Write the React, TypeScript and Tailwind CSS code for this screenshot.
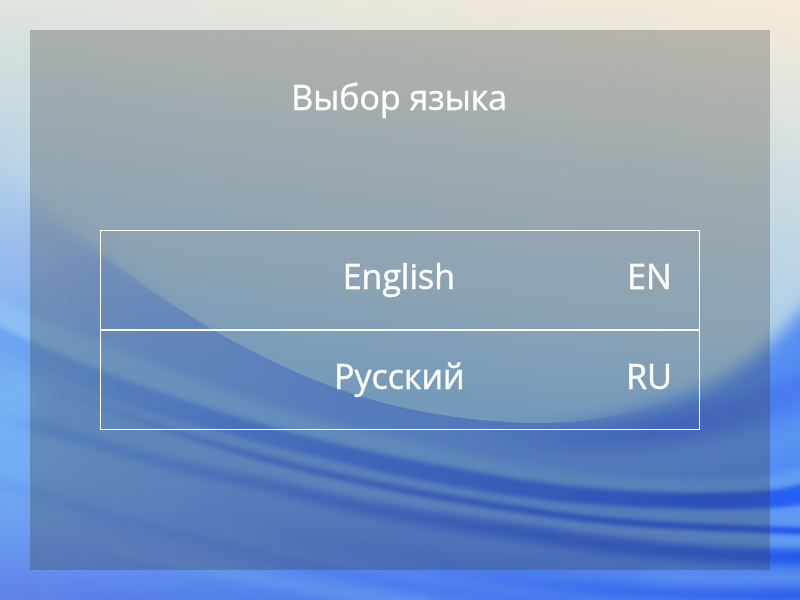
type Point = [number, number];

// Smooth Catmull-Rom curve through the points, starting with a move or a line.
function curve(points: Point[], start: 'M' | 'L' = 'M'): string {
  let d = `${start}${points[0][0]} ${points[0][1]}`;
  for (let i = 0; i < points.length - 1; i++) {
    const p0 = points[Math.max(0, i - 1)];
    const p1 = points[i];
    const p2 = points[i + 1];
    const p3 = points[Math.min(points.length - 1, i + 2)];
    d += `C${p1[0] + (p2[0] - p0[0]) / 6} ${p1[1] + (p2[1] - p0[1]) / 6} ${p2[0] - (p3[0] - p1[0]) / 6} ${p2[1] - (p3[1] - p1[1]) / 6} ${p2[0]} ${p2[1]}`;
  }
  return d;
}

function band(top: Point[], bottom: Point[]): string {
  return curve(top) + curve([...bottom].reverse(), 'L') + 'Z';
}

const bowl: Point[] = [[-40, 110], [0, 162], [30, 194], [60, 221], [100, 253], [155, 293], [215, 331], [270, 360], [325, 384], [380, 402], [430, 413], [480, 420], [530, 423], [580, 421], [630, 413], [680, 399], [720, 382], [755, 359], [780, 337], [840, 272]];
const ridge: Point[] = [[-40, 306], [0, 328], [30, 342], [90, 367], [135, 384], [200, 406], [270, 427], [340, 445], [400, 458], [470, 471], [530, 481], [600, 489], [680, 493], [760, 491], [800, 485], [840, 476]];
const ridgeTop: Point[] = [[-40, 275], [0, 298], [30, 314], [90, 338], [135, 356], [200, 381], [270, 405], [340, 425], [400, 439], [470, 455], [530, 466], [600, 475], [680, 479], [760, 477], [800, 468], [840, 459]];
const trough: Point[] = [[-40, 331], [0, 351], [30, 364], [100, 394], [150, 412], [200, 426], [270, 445], [340, 462], [400, 476], [470, 489], [530, 498], [600, 505], [700, 509], [770, 508], [800, 505], [840, 500]];
const line: Point[] = [[0, 368], [40, 383], [100, 407], [200, 440], [270, 460], [345, 478], [430, 495], [530, 511], [600, 520], [680, 526], [800, 531], [840, 532]];
const lowTop: Point[] = [[-40, 402], [0, 411], [30, 419], [100, 439], [180, 461], [270, 480], [360, 500], [450, 515], [530, 526], [600, 536], [700, 546], [800, 550], [840, 550]];
const lowBottom: Point[] = [[-40, 412], [0, 421], [30, 429], [100, 450], [180, 472], [270, 492], [360, 514], [450, 530], [530, 542], [600, 552], [700, 561], [800, 565], [840, 565]];
const fold: Point[] = [[-40, 473], [0, 484], [60, 501], [120, 520], [200, 541], [270, 558], [330, 571], [400, 584], [460, 593], [540, 602], [600, 608]];

function Wallpaper() {
  return (
    <svg className="absolute inset-0 h-full w-full" viewBox="0 0 800 600" aria-hidden="true">
      <defs>
        <linearGradient id="sky" gradientUnits="userSpaceOnUse" x1="0" y1="-104" x2="-58" y2="342">
          <stop offset="0" stopColor="#f5ebd7" />
          <stop offset=".1" stopColor="#ede8da" />
          <stop offset=".23" stopColor="#dfe4de" />
          <stop offset=".4" stopColor="#cddce0" />
          <stop offset=".55" stopColor="#bfd5e4" />
          <stop offset=".77" stopColor="#abcfe9" />
          <stop offset="1" stopColor="#8cc3f3" />
        </linearGradient>
        <linearGradient id="sea" gradientUnits="userSpaceOnUse" x1="0" y1="170" x2="0" y2="600">
          <stop offset="0" stopColor="#b2cfe9" />
          <stop offset=".15" stopColor="#9fc0ec" />
          <stop offset=".32" stopColor="#85b2ef" />
          <stop offset=".5" stopColor="#77aff3" />
          <stop offset=".68" stopColor="#73aff3" />
          <stop offset=".85" stopColor="#6b9cee" />
          <stop offset="1" stopColor="#5c80e8" />
        </linearGradient>
        <linearGradient id="deep" gradientUnits="userSpaceOnUse" x1="0" y1="0" x2="800" y2="0">
          <stop offset=".04" stopColor="#578cf0" stopOpacity="0" />
          <stop offset=".14" stopColor="#578cf0" stopOpacity=".2" />
          <stop offset=".5" stopColor="#4f86f4" stopOpacity=".62" />
          <stop offset="1" stopColor="#437ef2" stopOpacity=".7" />
        </linearGradient>
        <linearGradient id="dark" gradientUnits="userSpaceOnUse" x1="0" y1="0" x2="800" y2="0">
          <stop offset="0" stopColor="#6ca5f3" stopOpacity=".65" />
          <stop offset=".12" stopColor="#5c98f2" stopOpacity=".6" />
          <stop offset=".32" stopColor="#4683f2" stopOpacity=".9" />
          <stop offset=".5" stopColor="#3e74f0" />
          <stop offset=".7" stopColor="#2f68ee" />
          <stop offset=".9" stopColor="#2058ee" />
          <stop offset="1" stopColor="#285ff5" />
        </linearGradient>
        <linearGradient id="thin" gradientUnits="userSpaceOnUse" x1="0" y1="0" x2="800" y2="0">
          <stop offset=".06" stopColor="#5384ec" stopOpacity="0" />
          <stop offset=".33" stopColor="#4378ea" stopOpacity=".9" />
          <stop offset=".65" stopColor="#2d60e7" />
          <stop offset="1" stopColor="#1f53ed" />
        </linearGradient>
        <linearGradient id="low" gradientUnits="userSpaceOnUse" x1="0" y1="0" x2="800" y2="0">
          <stop offset="0" stopColor="#5d9cf0" stopOpacity=".75" />
          <stop offset=".4" stopColor="#4475ea" />
          <stop offset=".75" stopColor="#2f62e6" />
          <stop offset="1" stopColor="#2057ec" />
        </linearGradient>
        <linearGradient id="shine" gradientUnits="userSpaceOnUse" x1="0" y1="0" x2="800" y2="0">
          <stop offset="0" stopColor="#8fc3f3" />
          <stop offset=".35" stopColor="#7bb8f3" />
          <stop offset="1" stopColor="#69a5f1" />
        </linearGradient>
        <linearGradient id="rise" gradientUnits="userSpaceOnUse" x1="450" y1="0" x2="800" y2="0">
          <stop offset="0" stopColor="#3f70ec" stopOpacity="0" />
          <stop offset=".6" stopColor="#3d6cec" stopOpacity=".75" />
          <stop offset="1" stopColor="#4874ee" stopOpacity=".8" />
        </linearGradient>
        <linearGradient id="haze" gradientUnits="userSpaceOnUse" x1="180" y1="0" x2="640" y2="0">
          <stop offset="0" stopColor="#4777e8" stopOpacity="0" />
          <stop offset=".4" stopColor="#4777e8" stopOpacity=".55" />
          <stop offset="1" stopColor="#3f70ea" stopOpacity=".55" />
        </linearGradient>
        <linearGradient id="crease" gradientUnits="userSpaceOnUse" x1="0" y1="0" x2="600" y2="0">
          <stop offset="0" stopColor="#5d92ee" stopOpacity=".45" />
          <stop offset=".5" stopColor="#4b78ec" stopOpacity=".65" />
          <stop offset="1" stopColor="#3f70ec" stopOpacity=".75" />
        </linearGradient>
        <linearGradient id="floor" gradientUnits="userSpaceOnUse" x1="420" y1="0" x2="800" y2="0">
          <stop offset="0" stopColor="#2c5deb" stopOpacity="0" />
          <stop offset=".4" stopColor="#2c5deb" stopOpacity=".45" />
          <stop offset="1" stopColor="#2556ea" stopOpacity=".85" />
        </linearGradient>
        <linearGradient id="gleam" gradientUnits="userSpaceOnUse" x1="520" y1="0" x2="800" y2="0">
          <stop offset="0" stopColor="#5e8eee" stopOpacity="0" />
          <stop offset=".6" stopColor="#5e8eee" stopOpacity=".7" />
        </linearGradient>
        <linearGradient id="sharpness" gradientUnits="userSpaceOnUse" x1="0" y1="0" x2="800" y2="0">
          <stop offset=".08" stopColor="#000" />
          <stop offset=".28" stopColor="#fff" />
          <stop offset=".66" stopColor="#fff" />
          <stop offset=".82" stopColor="#000" />
        </linearGradient>
        <mask id="crisp" maskUnits="userSpaceOnUse" x="-50" y="0" width="900" height="700">
          <rect x="-50" width="900" height="700" fill="url(#sharpness)" />
        </mask>
        <filter id="b1" filterUnits="userSpaceOnUse" x="-60" y="-60" width="920" height="760"><feGaussianBlur stdDeviation="2.2" /></filter>
        <filter id="b3" filterUnits="userSpaceOnUse" x="-60" y="-60" width="920" height="760"><feGaussianBlur stdDeviation="4" /></filter>
        <filter id="b8" filterUnits="userSpaceOnUse" x="-60" y="-60" width="920" height="760"><feGaussianBlur stdDeviation="9" /></filter>
        <clipPath id="below"><path d={curve(bowl) + 'L840 640L-40 640Z'} /></clipPath>
      </defs>
      <rect width="800" height="600" fill="url(#sky)" />
      <path d={curve(bowl) + 'L840 660L-40 660Z'} fill="url(#sea)" filter="url(#b8)" />
      <path d={curve(bowl) + 'L840 660L-40 660Z'} fill="url(#deep)" filter="url(#b8)" />
      <g mask="url(#crisp)">
        <rect width="800" height="600" fill="url(#sky)" />
        <g clipPath="url(#below)">
          <rect y="150" width="800" height="450" fill="url(#sea)" />
          <rect x="-40" y="150" width="880" height="450" fill="url(#deep)" />
        </g>
      </g>

      <path d="M450 445Q700 450 840 368" fill="none" stroke="url(#rise)" strokeWidth="28" filter="url(#b8)" />
      <path d="M380 432Q640 490 840 424" fill="none" stroke="#70a6f0" strokeWidth="14" opacity=".5" filter="url(#b8)" />
      <path d={band(ridgeTop, ridge)} fill="url(#shine)" opacity=".72" filter="url(#b3)" />
      <path d={band(ridge, line)} fill="#6ca3f1" opacity=".6" filter="url(#b1)" />
      <path d={band(ridge, trough)} fill="url(#dark)" filter="url(#b1)" />
      <path d={band(line, lowTop)} fill="#70a8f1" opacity=".65" filter="url(#b1)" />
      <path d={curve(line)} fill="none" stroke="url(#thin)" strokeWidth="7" filter="url(#b1)" />
      <path d={band(lowTop, lowBottom)} fill="url(#low)" filter="url(#b3)" />
      <path d="M180 505Q390 568 640 580" fill="none" stroke="url(#haze)" strokeWidth="22" filter="url(#b8)" />
      <path d={curve(fold)} fill="none" stroke="url(#crease)" strokeWidth="10" filter="url(#b3)" />
      <path d="M-40 504Q190 576 430 606" fill="none" stroke="#6f9fee" strokeWidth="12" opacity=".5" filter="url(#b3)" />
      <path d="M520 568Q680 580 840 577" fill="none" stroke="url(#gleam)" strokeWidth="12" filter="url(#b3)" />
      <path d="M420 570Q630 602 840 594" fill="none" stroke="url(#floor)" strokeWidth="12" filter="url(#b3)" />
      <ellipse cx="0" cy="400" rx="45" ry="28" fill="#7ab8f3" opacity=".6" filter="url(#b8)" />
      <ellipse cx="200" cy="605" rx="130" ry="12" fill="#4f78e8" opacity=".6" filter="url(#b8)" />
    </svg>
  );
}

interface Language {
  name: string;
  code: string;
}

const languages: Language[] = [
  { name: 'English', code: 'EN' },
  { name: 'Русский', code: 'RU' },
];

export default function App() {
  return (
    <div className="relative h-[600px] w-[800px] overflow-hidden p-[30px] font-['Open_Sans','Noto_Sans',sans-serif] text-[35px] leading-[48px] text-white [-webkit-text-stroke:0.4px_white]">
      <Wallpaper />
      <main className="relative flex h-[540px] flex-col items-center bg-[#3c3c3c]/30 pt-[43px]">
        <h1 className="mr-px origin-center scale-x-[.97] whitespace-nowrap">Выбор языка</h1>
        <div className="mt-[109px] flex w-[600px] flex-col">
          {languages.map((language) => (
            <button
              key={language.code}
              type="button"
              className="grid h-[100px] grid-cols-[1fr_auto_1fr] items-center border border-white pr-[27px] pl-[25px] pb-[8px]"
            >
              <span className="col-start-2 scale-x-[.97]">{language.name}</span>
              <span className="origin-right scale-x-[.98] justify-self-end">{language.code}</span>
            </button>
          ))}
        </div>
      </main>
    </div>
  );
}
